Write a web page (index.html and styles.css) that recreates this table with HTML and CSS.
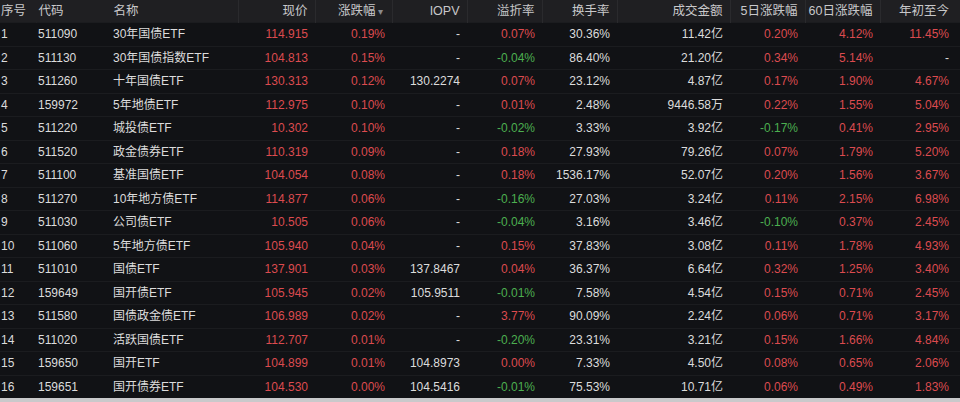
FILE: index.html
```html
<!DOCTYPE html>
<html lang="zh">
<head>
<meta charset="utf-8">
<link rel="stylesheet" href="styles.css">
</head>
<body>
<table class="quotes">
<colgroup>
<col class="c-no"><col class="c-code"><col class="c-name"><col class="c-w77"><col class="c-w77"><col class="c-w75"><col class="c-w75"><col class="c-w75"><col class="c-w113"><col class="c-w75"><col class="c-w75"><col class="c-last">
</colgroup>
<thead>
<tr>
<th class="l">序号</th><th class="l">代码</th><th class="l">名称</th><th>现价</th><th class="sorted">涨跌幅<span class="arrow">▾</span></th><th>IOPV</th><th>溢折率</th><th>换手率</th><th>成交金额</th><th>5日涨跌幅</th><th>60日涨跌幅</th><th>年初至今</th>
</tr>
</thead>
<tbody>
<tr><td class="l">1</td><td class="l">511090</td><td class="l">30年国债ETF</td><td class="up">114.915</td><td class="up">0.19%</td><td>-</td><td class="up">0.07%</td><td>30.36%</td><td>11.42亿</td><td class="up">0.20%</td><td class="up">4.12%</td><td class="up">11.45%</td></tr>
<tr><td class="l">2</td><td class="l">511130</td><td class="l">30年国债指数ETF</td><td class="up">104.813</td><td class="up">0.15%</td><td>-</td><td class="dn">-0.04%</td><td>86.40%</td><td>21.20亿</td><td class="up">0.34%</td><td class="up">5.14%</td><td>-</td></tr>
<tr><td class="l">3</td><td class="l">511260</td><td class="l">十年国债ETF</td><td class="up">130.313</td><td class="up">0.12%</td><td>130.2274</td><td class="up">0.07%</td><td>23.12%</td><td>4.87亿</td><td class="up">0.17%</td><td class="up">1.90%</td><td class="up">4.67%</td></tr>
<tr><td class="l">4</td><td class="l">159972</td><td class="l">5年地债ETF</td><td class="up">112.975</td><td class="up">0.10%</td><td>-</td><td class="up">0.01%</td><td>2.48%</td><td>9446.58万</td><td class="up">0.22%</td><td class="up">1.55%</td><td class="up">5.04%</td></tr>
<tr><td class="l">5</td><td class="l">511220</td><td class="l">城投债ETF</td><td class="up">10.302</td><td class="up">0.10%</td><td>-</td><td class="dn">-0.02%</td><td>3.33%</td><td>3.92亿</td><td class="dn">-0.17%</td><td class="up">0.41%</td><td class="up">2.95%</td></tr>
<tr><td class="l">6</td><td class="l">511520</td><td class="l">政金债券ETF</td><td class="up">110.319</td><td class="up">0.09%</td><td>-</td><td class="up">0.18%</td><td>27.93%</td><td>79.26亿</td><td class="up">0.07%</td><td class="up">1.79%</td><td class="up">5.20%</td></tr>
<tr><td class="l">7</td><td class="l">511100</td><td class="l">基准国债ETF</td><td class="up">104.054</td><td class="up">0.08%</td><td>-</td><td class="up">0.18%</td><td>1536.17%</td><td>52.07亿</td><td class="up">0.20%</td><td class="up">1.56%</td><td class="up">3.67%</td></tr>
<tr><td class="l">8</td><td class="l">511270</td><td class="l">10年地方债ETF</td><td class="up">114.877</td><td class="up">0.06%</td><td>-</td><td class="dn">-0.16%</td><td>27.03%</td><td>3.24亿</td><td class="up">0.11%</td><td class="up">2.15%</td><td class="up">6.98%</td></tr>
<tr><td class="l">9</td><td class="l">511030</td><td class="l">公司债ETF</td><td class="up">10.505</td><td class="up">0.06%</td><td>-</td><td class="dn">-0.04%</td><td>3.16%</td><td>3.46亿</td><td class="dn">-0.10%</td><td class="up">0.37%</td><td class="up">2.45%</td></tr>
<tr><td class="l">10</td><td class="l">511060</td><td class="l">5年地方债ETF</td><td class="up">105.940</td><td class="up">0.04%</td><td>-</td><td class="up">0.15%</td><td>37.83%</td><td>3.08亿</td><td class="up">0.11%</td><td class="up">1.78%</td><td class="up">4.93%</td></tr>
<tr><td class="l">11</td><td class="l">511010</td><td class="l">国债ETF</td><td class="up">137.901</td><td class="up">0.03%</td><td>137.8467</td><td class="up">0.04%</td><td>36.37%</td><td>6.64亿</td><td class="up">0.32%</td><td class="up">1.25%</td><td class="up">3.40%</td></tr>
<tr><td class="l">12</td><td class="l">159649</td><td class="l">国开债ETF</td><td class="up">105.945</td><td class="up">0.02%</td><td>105.9511</td><td class="dn">-0.01%</td><td>7.58%</td><td>4.54亿</td><td class="up">0.15%</td><td class="up">0.71%</td><td class="up">2.45%</td></tr>
<tr><td class="l">13</td><td class="l">511580</td><td class="l">国债政金债ETF</td><td class="up">106.989</td><td class="up">0.02%</td><td>-</td><td class="up">3.77%</td><td>90.09%</td><td>2.24亿</td><td class="up">0.06%</td><td class="up">0.71%</td><td class="up">3.17%</td></tr>
<tr><td class="l">14</td><td class="l">511020</td><td class="l">活跃国债ETF</td><td class="up">112.707</td><td class="up">0.01%</td><td>-</td><td class="dn">-0.20%</td><td>23.31%</td><td>3.21亿</td><td class="up">0.15%</td><td class="up">1.66%</td><td class="up">4.84%</td></tr>
<tr><td class="l">15</td><td class="l">159650</td><td class="l">国开ETF</td><td class="up">104.899</td><td class="up">0.01%</td><td>104.8973</td><td class="up">0.00%</td><td>7.33%</td><td>4.50亿</td><td class="up">0.08%</td><td class="up">0.65%</td><td class="up">2.06%</td></tr>
<tr><td class="l">16</td><td class="l">159651</td><td class="l">国开债券ETF</td><td class="up">104.530</td><td class="up">0.00%</td><td>104.5416</td><td class="dn">-0.01%</td><td>75.53%</td><td>10.71亿</td><td class="up">0.06%</td><td class="up">0.49%</td><td class="up">1.83%</td></tr>
</tbody>
</table>
</body>
</html>
```
FILE: styles.css
```css
html, body {
  margin: 0;
  padding: 0;
}
body {
  width: 960px;
  height: 402px;
  background: #c9c9cb;
  font-family: "Liberation Sans", "Noto Sans CJK SC", sans-serif;
  font-size: 12px;
  overflow: hidden;
}
.quotes {
  width: 960px;
  table-layout: fixed;
  border-collapse: collapse;
  background: #111215;
  color: #dcdcdc;
}
.c-no { width: 36px; }
.c-code { width: 74px; }
.c-name { width: 128px; }
.c-w77 { width: 77px; }
.c-w75 { width: 75px; }
.c-last { width: 80px; }
.c-w113 { width: 113px; }
.quotes th {
  height: 22px;
  line-height: 14px;
  padding: 0 7px 0 0;
  background: #1f1f22;
  color: #c8c8ca;
  font-weight: normal;
  font-size: 12.5px;
  text-align: right;
  border-right: 1px solid #2a2a2d;
  white-space: nowrap;
  overflow: hidden;
}
.quotes th:last-child {
  border-right: none;
  padding-right: 11px;
}
.quotes th.l {
  text-align: left;
  padding-left: 1px;
}
.quotes th:nth-child(2) { padding-left: 2px; }
.quotes th:nth-child(3) { padding-left: 3px; }
.quotes th:nth-child(1), .quotes th:nth-child(2) { border-right-color: #1f1f22; }
.arrow {
  color: #8a8a8e;
  font-size: 10px;
  margin-left: 2px;
}
.quotes th.sorted { padding-right: 9px; }
.quotes td {
  height: 22.5px;
  line-height: 14px;
  padding: 0 7px 0 0;
  text-align: right;
  border-top: 1px solid #1b1c1f;
  white-space: nowrap;
  overflow: hidden;
}
.quotes td:last-child { padding-right: 11px; }
.quotes td.l {
  text-align: left;
  padding-left: 1px;
}
.quotes td:nth-child(2) { padding-left: 2px; }
.quotes td:nth-child(3) { padding-left: 3px; }
.up { color: #dc4b4f; }
.dn { color: #4caf50; }
```
